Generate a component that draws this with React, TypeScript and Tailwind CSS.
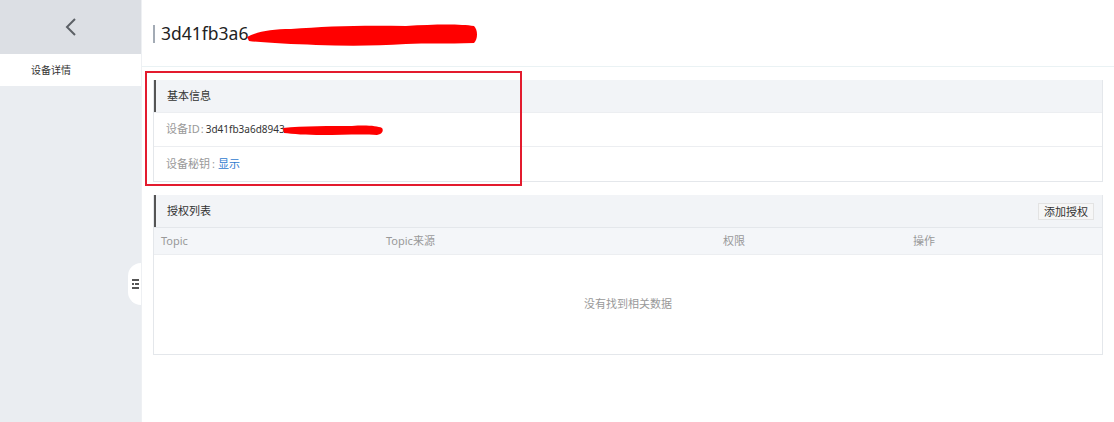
import React from "react";

const cjk = { fontFamily: '"Noto Sans", "Noto Sans CJK SC", sans-serif' };

function Scribble({ w, h, d }: { w: number; h: number; d: string }) {
  return (
    <svg width={w} height={h} viewBox={`0 0 ${w} ${h}`} className="block shrink-0">
      <path d={d} fill="#f00" />
    </svg>
  );
}

export default function App() {
  return (
    <div className="flex w-[1114px] h-[422px] bg-white overflow-hidden text-[#333]" style={cjk}>
      <aside className="relative w-[141px] shrink-0 bg-[#eaedf1] flex flex-col">
        <div className="h-[54px] bg-[#dcdfe4] flex items-center justify-center">
          <svg width="14" height="20" viewBox="0 0 14 20">
            <path d="M11 2 L3 10 L11 18" fill="none" stroke="#5c6066" strokeWidth="2" />
          </svg>
        </div>
        <div className="h-[32px] bg-white flex items-center pl-[31px] text-[10px] text-[#333]">设备详情</div>
        <div className="absolute right-0 top-[263px] w-[13px] h-[42px] bg-white rounded-l-full flex items-center justify-end pr-[2px]">
          <svg width="7" height="12" viewBox="0 0 7 12">
            <rect x="0" y="1" width="7" height="2" fill="#555" />
            <rect x="0" y="5" width="2" height="2" fill="#555" />
            <rect x="3" y="5" width="4" height="2" fill="#555" />
            <rect x="0" y="9" width="7" height="2" fill="#555" />
          </svg>
        </div>
      </aside>
      <main className="flex-1 border-l border-[#eef0f3] flex flex-col">
        <header className="h-[67px] border-b border-[#eaf2f4] flex items-center pl-[11px] pt-[1px]">
          <div className="w-[2px] h-[18px] bg-[#a3abb5]" />
          <div className="flex items-center pl-[6px]">
            <span className="text-[17.5px] text-[#222] leading-none">3d41fb3a6</span>
            <div className="-ml-[2px] mt-[2px]">
              <Scribble
                w={232}
                h={24}
                d="M1 14 C10 9 25 6 45 6 C80 3 120 2 160 3 C190 1 215 1 228 3 C232 7 232 16 228 20 C200 21 180 20 160 21 C130 23 100 23 70 22 C45 21 20 20 3 18 Z"
              />
            </div>
          </div>
        </header>
        <div className="relative px-[11px] pt-[13px] flex flex-col gap-[13px]">
          <section className="border border-[#e4e7eb] border-t-0">
            <div className="h-[32px] bg-[#f2f4f7] border-l-2 border-[#555] flex items-center pl-[11px] text-[11px] text-[#333]">基本信息</div>
            <div className="h-[34px] border-t border-[#eceef1] flex items-center pl-[12px] text-[11px]">
              <span className="text-[#999]">设备ID</span>
              <span className="text-[#999] ml-[1px] mr-[2px]">:</span>
              <span className="text-[#333] text-[10px]">3d41fb3a6d8943</span>
              <div className="-ml-[3px]">
                <Scribble
                  w={102}
                  h={12}
                  d="M1 4 C20 2 50 2 70 2 C85 1 95 2 100 4 C102 7 100 10 95 11 C80 10 60 11 40 11 C25 11 10 10 2 9 Z"
                />
              </div>
            </div>
            <div className="h-[35px] border-t border-[#eceef1] flex items-center pl-[12px] text-[11px]">
              <span className="text-[#999]">设备秘钥</span>
              <span className="text-[#999] ml-[2px]">:</span>
              <span className="text-[#2f7bcf] ml-[3px]">显示</span>
            </div>
          </section>
          <section className="border border-[#e4e7eb] border-t-0">
            <div className="h-[32px] bg-[#f2f4f7] border-l-2 border-[#555] flex items-center justify-between pl-[11px] pr-[8px] text-[11px] text-[#333]">
              <span>授权列表</span>
              <button className="h-[17px] px-[5px] bg-[#f6f6f6] border border-[#e3e3e3] text-[11px] leading-none text-[#333]">添加授权</button>
            </div>
            <div className="grid grid-cols-[225px_337px_190px_1fr] h-[27px] bg-[#f4f6f9] border-t border-[#e4e7eb] items-center text-[11px] text-[#999]">
              <span className="pl-[7px]">Topic</span>
              <span className="pl-[7px]">Topic来源</span>
              <span className="pl-[7px]">权限</span>
              <span className="pl-[7px]">操作</span>
            </div>
            <div className="h-[100px] border-t border-[#eceef1] flex items-center justify-center text-[11px] text-[#999]">没有找到相关数据</div>
          </section>
          <div className="absolute left-[3px] top-[4px] w-[377px] h-[115px] border-2 border-[#e31b2e] pointer-events-none" />
        </div>
      </main>
    </div>
  );
}
